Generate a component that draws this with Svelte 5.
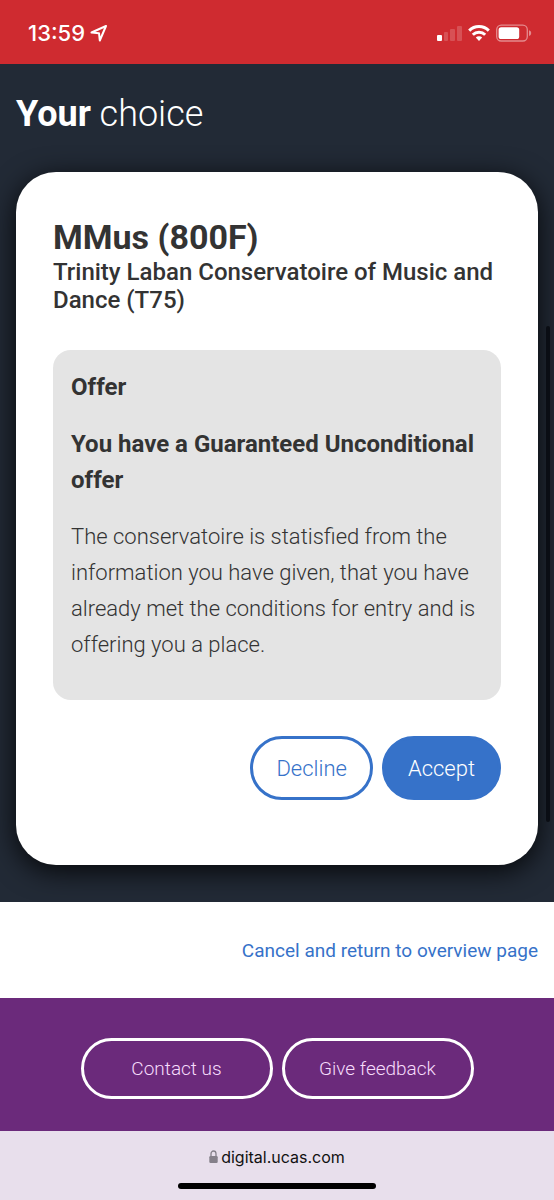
<script lang="ts">
	// Types/constants
	type Choice = {
		course: string
		provider: string
		status: string
		summary: string
		details: string
	}

	const choice: Choice = {
		course: 'MMus (800F)',
		provider: 'Trinity Laban Conservatoire of Music and Dance (T75)',
		status: 'Offer',
		summary: 'You have a Guaranteed Unconditional offer',
		details: 'The conservatoire is statisfied from the information you have given, that you have already met the conditions for entry and is offering you a place.',
	}

	const footerActions = ['Contact us', 'Give feedback']


	// State
	let reply = $state<'accepted' | 'declined' | undefined>()
</script>


<div class="screen">
	<header class="status-bar">
		<div class="clock">
			<time>13:59</time>
			<svg width="18" height="18" viewBox="0 0 18 18" aria-hidden="true">
				<path d="M16 2 1.5 8.5 9 9.2 9.8 16.5Z" fill="none" stroke="currentColor" stroke-width="2" stroke-linejoin="round" />
			</svg>
		</div>

		<div class="indicators">
			<svg width="26" height="18" viewBox="0 0 26 18" fill="currentColor" aria-hidden="true">
				<rect x="1" y="11" width="5" height="6" rx="1" />
				<rect x="8" y="8" width="4" height="9" rx="1" opacity="0.18" />
				<rect x="14" y="5" width="5" height="12" rx="1" opacity="0.18" />
				<rect x="21" y="2" width="5" height="15" rx="1" opacity="0.18" />
			</svg>
			<svg width="22" height="18" viewBox="0 0 22 18" fill="none" stroke="currentColor" stroke-width="3" aria-hidden="true">
				<path d="M1.2 6.6A14 14 0 0 1 20.8 6.6" />
				<path d="M4.8 10.7A8.8 8.8 0 0 1 17.2 10.7" />
				<path d="M7.8 13.5A4.6 4.6 0 0 1 14.2 13.5L11 16.9Z" fill="currentColor" stroke="none" />
			</svg>
			<svg width="36" height="18" viewBox="0 0 36 18" aria-hidden="true">
				<rect x="0.7" y="1.2" width="30.6" height="15.8" rx="4.5" fill="none" stroke="currentColor" stroke-width="1.3" opacity="0.45" />
				<rect x="2.6" y="3.2" width="20.6" height="11.8" rx="2.6" fill="currentColor" />
				<path d="M33 6.2a3 3 0 0 1 0 5.8z" fill="currentColor" opacity="0.45" />
			</svg>
		</div>
	</header>

	<main>
		<section class="choice">
			<h1><strong>Your</strong> choice</h1>

			<article class="card">
				<h2>{choice.course}</h2>
				<p class="provider">{choice.provider}</p>

				<div class="offer">
					<h3>{choice.status}</h3>
					<h3>{choice.summary}</h3>
					<p>{choice.details}</p>
				</div>

				<div class="replies">
					<button
						class="outline"
						aria-pressed={reply === 'declined'}
						onclick={() => { reply = 'declined' }}
					>
						Decline
					</button>
					<button
						class="primary"
						aria-pressed={reply === 'accepted'}
						onclick={() => { reply = 'accepted' }}
					>
						Accept
					</button>
				</div>
			</article>

			<div class="scroll-thumb"></div>
		</section>

		<nav>
			<a href="#overview">Cancel and return to overview page</a>
		</nav>
	</main>

	<footer>
		{#each footerActions as action (action)}
			<button>{action}</button>
		{/each}
	</footer>

	<div class="browser-bar">
		<div class="address">
			<svg width="9" height="14" viewBox="0 0 9 14" aria-hidden="true">
				<path d="M2 7V3.8a2.5 2.8 0 0 1 5 0V7" fill="none" stroke="#85808a" stroke-width="1.3" />
				<rect x="0.3" y="6" width="8.4" height="7" rx="1.2" fill="#85808a" />
			</svg>
			<span>digital.ucas.com</span>
		</div>
		<div class="home-indicator"></div>
	</div>
</div>


<style>
	:global(body) {
		margin: 0;
	}

	.screen {
		display: flex;
		flex-direction: column;
		min-height: 100vh;
		background: #fff;
		color: #333;
		font-family: Roboto, 'Liberation Sans', sans-serif;
	}

	h1, h2, h3, p {
		margin: 0;
	}

	button {
		box-sizing: border-box;
		font: inherit;
		font-weight: 300;
		cursor: pointer;
	}

	.status-bar {
		display: flex;
		align-items: center;
		justify-content: space-between;
		box-sizing: border-box;
		height: 64px;
		padding: 2px 22px 0 28px;
		background: #cf2b30;
		color: #fff;
	}

	.clock, .indicators {
		display: flex;
		align-items: center;
	}

	.clock {
		gap: 5px;
		font: 500 22px/24px Inter, sans-serif;
	}

	.indicators {
		gap: 6px;
	}

	.choice {
		position: relative;
		padding: 29px 16px 37px;
		background: #222a36;
	}

	h1 {
		margin-bottom: 37px;
		color: #fff;
		font-size: 36px;
		font-weight: 300;
		line-height: 42px;

		strong {
			font-weight: 700;
		}
	}

	.card {
		padding: 46px 37px 65px;
		border-radius: 40px;
		background: #fff;
		box-shadow: 0 6px 28px rgba(0, 0, 0, 0.85);
	}

	h2 {
		margin-bottom: 2px;
		font-size: 34px;
		font-weight: 700;
		line-height: 38px;
	}

	.provider {
		font-size: 24px;
		font-weight: 500;
		line-height: 28px;
	}

	.offer {
		margin: 36px 0;
		padding: 19px 18px 37px;
		border-radius: 18px;
		background: #e4e4e4;

		h3 {
			margin-bottom: 21px;
			font-size: 24px;
			font-weight: 700;
			line-height: 36px;
		}

		p {
			font-size: 22px;
			font-weight: 300;
			line-height: 36px;
		}
	}

	.replies {
		display: flex;
		justify-content: flex-end;
		gap: 9px;

		button {
			height: 64px;
			padding: 0 23px;
			border: 3px solid #3672c9;
			border-radius: 32px;
			font-size: 22px;
		}
	}

	.outline {
		background: #fff;
		color: #3672c9;
	}

	.primary {
		background: #3672c9;
		color: #fff;
	}

	.scroll-thumb {
		position: absolute;
		top: 262px;
		right: 4px;
		bottom: 80px;
		width: 4px;
		border-radius: 2px;
		background: #0a0d14;
	}

	nav {
		display: flex;
		justify-content: flex-end;
		padding: 37px 16px 35px;

		a {
			color: #3672c9;
			font-size: 19px;
			line-height: 24px;
			text-decoration: none;
		}
	}

	footer {
		display: flex;
		flex: 1;
		align-items: flex-start;
		justify-content: center;
		gap: 9px;
		padding: 40px 16px 32px;
		background: #6b2a7b;

		button {
			width: 192px;
			height: 61px;
			border: 3px solid #fff;
			border-radius: 31px;
			background: transparent;
			color: #f6dcfb;
			font-size: 19px;
		}
	}

	.browser-bar {
		display: flex;
		flex-direction: column;
		align-items: center;
		gap: 16px;
		padding: 16px 0 11px;
		background: #e8dfec;
	}

	.address {
		display: flex;
		align-items: center;
		gap: 3px;
		color: #111;
		font: 400 16px/20px Inter, sans-serif;
	}

	.home-indicator {
		width: 198px;
		height: 6px;
		border-radius: 3px;
		background: #000;
	}
</style>
